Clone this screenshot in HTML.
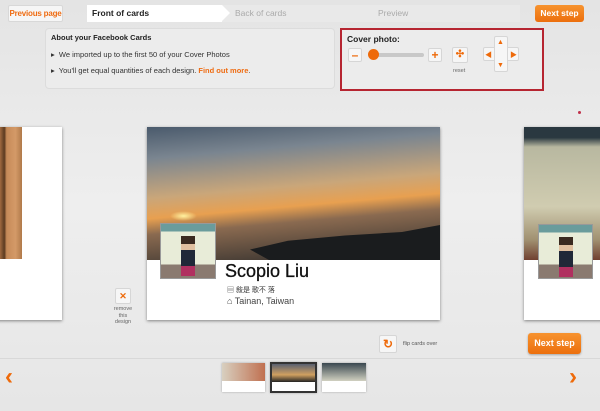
<!DOCTYPE html>
<html><head><meta charset="utf-8"><style>
*{margin:0;padding:0;box-sizing:border-box;white-space:nowrap}
body{width:600px;height:411px;overflow:hidden;background:linear-gradient(#e4e4e4,#eeeeee 50%,#e6e6e6);font-family:"Liberation Sans","Noto Sans CJK TC",sans-serif;position:relative}
.a{position:absolute}
.btn{background:#f6f6f6;border:1px solid #d8d8d8;border-radius:2px}
.ob{background:linear-gradient(#f7932f,#ec6f0d);color:#fff;font-weight:bold;border-radius:3px;text-align:center}
.sq{width:14px;height:14px;background:#f6f6f6;border:1px solid #d6d6d6;border-radius:2px;color:#ee6a0a;font-weight:bold;font-size:12px;line-height:12px;text-align:center}
.card{background:#fff;box-shadow:0 1px 3px rgba(0,0,0,.45)}
.pp{border:1px solid #999;background:linear-gradient(#6a9c9c 0 14%,#e8ecd8 14% 75%,#8a7a70 75%)}
.th{background:#fff;box-shadow:0 0 2px rgba(0,0,0,.3)}
</style></head><body>
<div class="a btn" style="left:8px;top:5px;width:55px;height:17px;font-size:8px;color:#ef6c12;line-height:15px;text-align:center;font-weight:bold;letter-spacing:-0.2px">Previous page</div>
<div class="a" style="left:87px;top:5px;width:433px;height:17px;background:#e9e9e9"></div>
<div class="a" style="left:87px;top:5px;width:135px;height:17px;background:#fff;font-size:8.5px;font-weight:bold;line-height:17px;padding-left:5px;color:#222">Front of cards</div>
<div class="a" style="left:222px;top:5px;width:0;height:0;border-top:8.5px solid transparent;border-bottom:8.5px solid transparent;border-left:8px solid #fff"></div>
<div class="a" style="left:235px;top:5px;font-size:8.5px;line-height:17px;color:#aaa">Back of cards</div>
<div class="a" style="left:378px;top:5px;font-size:8.5px;line-height:17px;color:#aaa">Preview</div>
<div class="a ob" style="left:535px;top:5px;width:49px;height:17px;font-size:8.5px;line-height:17px">Next step</div>
<div class="a" style="left:45px;top:28px;width:290px;height:61px;background:#ececec;border:1px solid #dcdcdc;border-radius:4px"></div>
<div class="a" style="left:51px;top:33px;font-size:7.5px;font-weight:bold;color:#222">About your Facebook Cards</div>
<div class="a" style="left:51px;top:50px;font-size:7.5px;color:#333">▸&nbsp; We imported up to the first 50 of your Cover Photos</div>
<div class="a" style="left:51px;top:66px;font-size:7.5px;color:#333">▸&nbsp; You'll get equal quantities of each design. <b style="color:#ef6c12">Find out more</b>.</div>
<div class="a" style="left:340px;top:28px;width:204px;height:63px;border:2px solid #b62531;background:#ececec"></div>
<div class="a" style="left:347px;top:34px;font-size:8.5px;font-weight:bold;color:#222">Cover photo:</div>
<div class="a sq" style="left:348px;top:48px">–</div>
<div class="a" style="left:372px;top:53px;width:52px;height:4px;background:#c8c8c8;border-radius:2px"></div>
<div class="a" style="left:368px;top:49px;width:11px;height:11px;background:#ee6a0a;border-radius:50%"></div>
<div class="a sq" style="left:428px;top:48px">+</div>
<div class="a sq" style="left:452px;top:47px;width:16px;height:16px;font-size:10px;line-height:14px">✣</div>
<div class="a" style="left:453px;top:68px;font-size:5.5px;color:#666">reset</div>
<div class="a" style="left:483px;top:47px;width:36px;height:14px;background:#f6f6f6;border:1px solid #d6d6d6;border-radius:2px"></div>
<div class="a" style="left:494px;top:36px;width:14px;height:36px;background:#f6f6f6;border:1px solid #d6d6d6;border-radius:2px"></div>
<div class="a" style="left:495px;top:48px;width:12px;height:12px;background:#f6f6f6"></div>
<div class="a" style="left:497px;top:39px;font-size:7px;color:#ee6a0a">▲</div>
<div class="a" style="left:497px;top:62px;font-size:7px;color:#ee6a0a">▼</div>
<div class="a" style="left:485px;top:50px;font-size:7px;color:#ee6a0a">◀</div>
<div class="a" style="left:510px;top:50px;font-size:7px;color:#ee6a0a">▶</div>
<div class="a" style="left:578px;top:111px;width:3px;height:3px;background:#c0304a;border-radius:50%"></div>
<div class="a card" style="left:-10px;top:127px;width:72px;height:193px"></div>
<div class="a" style="left:0;top:127px;width:22px;height:132px;background:linear-gradient(90deg,#a06a40,#5a3a20 20%,#c58a58 30%,#d49a68 70%,#b07a4a)"></div>
<div class="a card" style="left:147px;top:127px;width:293px;height:193px"></div>
<div class="a" style="left:147px;top:127px;width:293px;height:133px;background:linear-gradient(175deg,#4a5a6c 0%,#7a8590 20%,#c9a67a 45%,#e8a050 58%,#8a6a50 68%,#2a2a2a 100%)"></div>
<div class="a" style="left:170px;top:211px;width:27px;height:10px;background:radial-gradient(#fff2a0,rgba(255,200,80,0) 70%)"></div>
<div class="a" style="left:250px;top:225px;width:190px;height:35px;background:#1a1c1e;clip-path:polygon(0 70%,20% 45%,50% 30%,80% 20%,100% 0,100% 100%,10% 100%)"></div>
<div class="a pp" style="left:160px;top:223px;width:56px;height:56px"></div>
<div class="a" style="left:181px;top:236px;width:14px;height:40px;background:linear-gradient(#3a2a20 0 20%,#e0c0a0 20% 35%,#202838 35% 75%,#b03060 75%)"></div>
<div class="a" style="left:225px;top:261px;font-size:18px;color:#111;font-weight:500;-webkit-text-stroke:0.3px #111">Scopio Liu</div>
<div class="a" style="left:227px;top:285px;font-size:7px;color:#333">▤ 敍是 歌不 落</div>
<div class="a" style="left:227px;top:296px;font-size:9px;color:#444">⌂ Tainan, Taiwan</div>
<div class="a card" style="left:524px;top:127px;width:90px;height:193px"></div>
<div class="a" style="left:524px;top:127px;width:76px;height:133px;background:linear-gradient(#2a3840 0 8%,#b8b8a0 15%,#d0ccb0 60%,#a09070 85%,#704030)"></div>
<div class="a pp" style="left:538px;top:224px;width:55px;height:55px"></div>
<div class="a" style="left:559px;top:237px;width:14px;height:40px;background:linear-gradient(#3a2a20 0 20%,#e0c0a0 20% 35%,#202838 35% 75%,#b03060 75%)"></div>
<div class="a sq" style="left:115px;top:288px;width:16px;height:16px;font-size:9px;line-height:14px">✕</div>
<div class="a" style="left:110px;top:306px;width:26px;font-size:5.5px;color:#666;text-align:center;line-height:6.5px;white-space:normal">remove this design</div>
<div class="a sq" style="left:379px;top:335px;width:18px;height:18px;font-size:12px;line-height:16px">↻</div>
<div class="a" style="left:403px;top:341px;font-size:5.5px;color:#555">flip cards over</div>
<div class="a ob" style="left:528px;top:333px;width:53px;height:21px;font-size:9px;line-height:21px;box-shadow:0 1px 2px rgba(0,0,0,.3)">Next step</div>
<div class="a" style="left:0;top:358px;width:600px;height:1px;background:#fafafa;border-top:1px solid #d8d8d8"></div>
<div class="a" style="left:5px;top:363px;font-size:24px;font-weight:bold;color:#ee6a0a">‹</div>
<div class="a" style="left:569px;top:363px;font-size:24px;font-weight:bold;color:#ee6a0a">›</div>
<div class="a th" style="left:222px;top:363px;width:43px;height:29px"><div style="height:18px;background:linear-gradient(90deg,#d8d0c0,#c07050)"></div></div>
<div class="a th" style="left:270px;top:362px;width:47px;height:31px;border:2px solid #333"><div style="height:18px;background:linear-gradient(#5a6070,#d0a060 60%,#222)"></div></div>
<div class="a th" style="left:322px;top:363px;width:44px;height:29px"><div style="height:18px;background:linear-gradient(#3a4850,#d0d0c0)"></div></div>
</body></html>
